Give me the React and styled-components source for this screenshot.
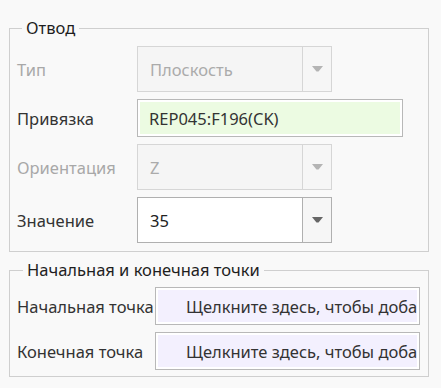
import React from 'react'
import styled, { createGlobalStyle } from 'styled-components'

const Global = createGlobalStyle`
  html, body {
    margin: 0;
    padding: 0;
    background: #f9f9f9;
    font-family: "Noto Sans", "Open Sans", sans-serif;
  }
`

const Page = styled.div`
  width: 441px;
  height: 388px;
  box-sizing: border-box;
  padding: 18px 12px 0 9px;
  display: flex;
  flex-direction: column;
  gap: 8px;
`

const Group = styled.fieldset`
  margin: 0;
  border: 1px solid #cfcfcf;
  padding: ${p => p.$pad};
  display: flex;
  flex-direction: column;
  gap: 7px;
`

const Legend = styled.legend`
  padding: 0 4px;
  margin-left: ${p => p.$shift}px;
  font-size: 16.5px;
  line-height: 20px;
  color: #1e1e1e;
`

const Row = styled.div`
  display: flex;
  align-items: center;
  height: ${p => p.$h}px;
`

const Label = styled.div`
  width: ${p => p.$w}px;
  flex: none;
  font-size: 16.5px;
  color: ${p => (p.$disabled ? '#a8a8a8' : '#333333')};
  white-space: nowrap;
`

const Combo = styled.div`
  width: 195px;
  height: 46px;
  box-sizing: border-box;
  display: flex;
  border: 1px solid ${p => (p.$disabled ? '#d6d6d6' : '#b0b0b0')};
  background: ${p => (p.$disabled ? '#f5f5f5' : '#ffffff')};
`

const ComboText = styled.div`
  flex: 1;
  display: flex;
  align-items: center;
  padding-left: 12px;
  font-size: 16.5px;
  color: ${p => (p.$disabled ? '#ababab' : '#222222')};
`

const ComboButton = styled.div`
  width: 28px;
  flex: none;
  display: flex;
  align-items: center;
  justify-content: center;
  border-left: 1px solid ${p => (p.$disabled ? '#d6d6d6' : '#b0b0b0')};
  background: #f6f6f6;
`

const Field = styled.div`
  width: ${p => p.$w}px;
  height: 38px;
  box-sizing: border-box;
  border: 1px solid #b8b8b8;
  padding: 2px;
  background: #ffffff;
  display: flex;
`

const FieldInner = styled.div`
  flex: 1;
  display: flex;
  align-items: center;
  padding-left: ${p => p.$pl}px;
  background: ${p => p.$bg};
  font-size: 16.5px;
  color: #333333;
  white-space: nowrap;
  overflow: hidden;
`

function Arrow({ disabled }) {
  return (
    <svg width="11" height="6" viewBox="0 0 11 6">
      <path d="M0 0H11L6.5 5.5H4.5Z" fill={disabled ? '#b4b4b4' : '#666666'} />
    </svg>
  )
}

function Select({ value, disabled }) {
  return (
    <Combo $disabled={disabled}>
      <ComboText $disabled={disabled}>{value}</ComboText>
      <ComboButton $disabled={disabled}>
        <Arrow disabled={disabled} />
      </ComboButton>
    </Combo>
  )
}

export default function App() {
  return (
    <>
      <Global />
      <Page>
        <Group $pad="8px 7px 8px 7px">
          <Legend $shift={5}>Отвод</Legend>
          <Row $h={46}>
            <Label $w={120} $disabled>Тип</Label>
            <Select value="Плоскость" disabled />
          </Row>
          <Row $h={38}>
            <Label $w={120}>Привязка</Label>
            <Field $w={266}>
              <FieldInner $bg="#ecfbe2" $pl={9}>REP045:F196(CK)</FieldInner>
            </Field>
          </Row>
          <Row $h={46}>
            <Label $w={120} $disabled>Ориентация</Label>
            <Select value="Z" disabled />
          </Row>
          <Row $h={46}>
            <Label $w={120}>Значение</Label>
            <Select value="35" />
          </Row>
        </Group>
        <Group $pad="7px 7px 6px 7px">
          <Legend $shift={6}>Начальная и конечная точки</Legend>
          <Row $h={38}>
            <Label $w={138}>Начальная точка</Label>
            <Field $w={265}>
              <FieldInner $bg="#f3f0fe" $pl={28}>Щелкните здесь, чтобы добавить</FieldInner>
            </Field>
          </Row>
          <Row $h={38}>
            <Label $w={138}>Конечная точка</Label>
            <Field $w={265}>
              <FieldInner $bg="#f3f0fe" $pl={28}>Щелкните здесь, чтобы добавить</FieldInner>
            </Field>
          </Row>
        </Group>
      </Page>
    </>
  )
}
